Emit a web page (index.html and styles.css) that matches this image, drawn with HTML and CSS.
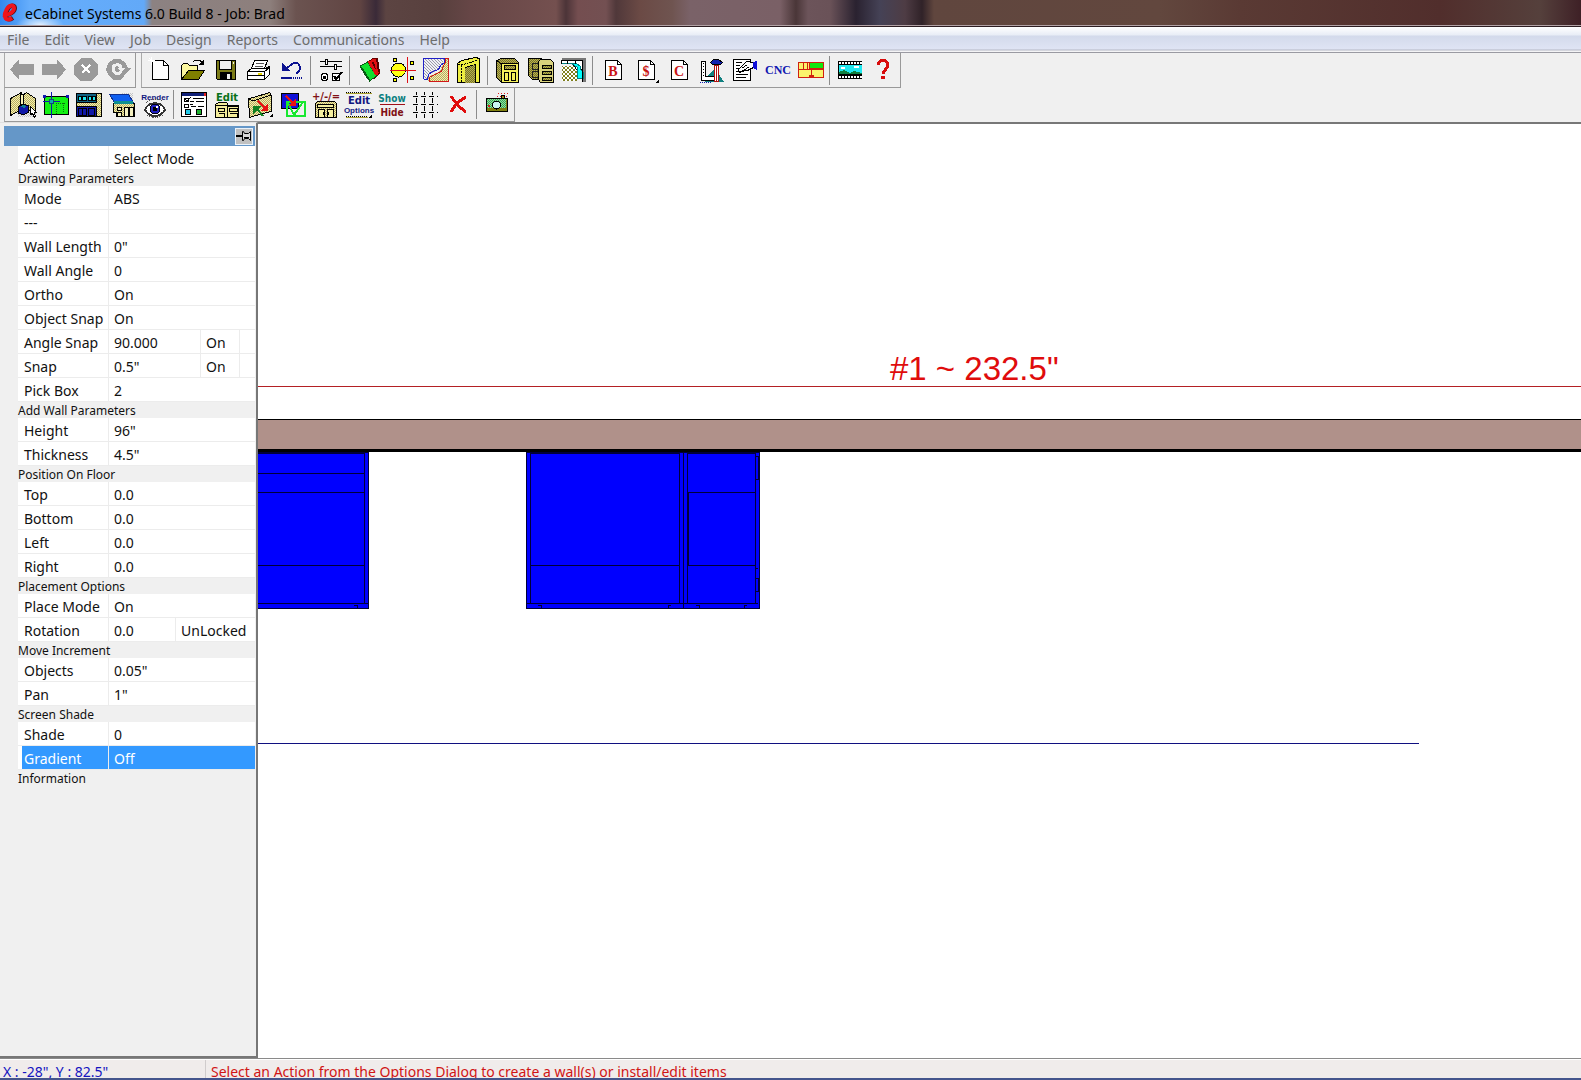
FILE: index.html
```html
<!DOCTYPE html>
<html lang="en">
<head>
    <meta charset="UTF-8">
    <meta name="viewport" content="width=device-width, initial-scale=1.0">
    <title>eCabinet Systems 6.0 Build 8 - Job: Brad</title>
    <link rel="stylesheet" href="styles.css">
</head>
<body>
    <!-- shared dither fills for the toolbar icons -->
    <svg class="defs" width="0" height="0" aria-hidden="true">
        <defs>
            <pattern id="khaki" width="2" height="2" patternUnits="userSpaceOnUse"><path fill="#f6efac" d="M0 0h2v2H0z"/><path fill="#b5ac62" d="M0 0h1v1H0zM1 1h1v1H1z"/></pattern>
            <pattern id="olive" width="2" height="2" patternUnits="userSpaceOnUse"><path fill="#b9b04e" d="M0 0h2v2H0z"/><path fill="#77742a" d="M0 0h1v1H0zM1 1h1v1H1z"/></pattern>
            <pattern id="check" width="4" height="4" patternUnits="userSpaceOnUse"><path fill="#fff" d="M0 0h4v4H0z"/><path fill="#808020" d="M0 0h2v2H0zM2 2h2v2H2z"/></pattern>
            <pattern id="grey" width="2" height="2" patternUnits="userSpaceOnUse"><path fill="#c4c4c4" d="M0 0h1v1H0zM1 1h1v1H1z"/></pattern>
            <pattern id="hatch" width="3" height="3" patternUnits="userSpaceOnUse"><path fill="#f0f0f6" d="M0 0h3v3H0z"/><path fill="#9a9aa8" d="M0 0h1v1H0zM1 1h1v1H1zM2 2h1v1H2z"/></pattern>
            <pattern id="greens" width="2" height="2" patternUnits="userSpaceOnUse"><path fill="#8fe0a0" d="M0 0h2v2H0z"/><path fill="#3aa455" d="M0 0h1v1H0zM1 1h1v1H1z"/></pattern>
        </defs>
    </svg>

    <header class="titlebar">
        <svg class="logo" viewBox="0 0 18 20" aria-hidden="true"><path fill="none" stroke="#5a0d12" stroke-width="4" d="M3 12c5 1 11-3 11-7 0-4-6-3-8 3-3 6 0 11 6 7"/><path fill="none" stroke="#f0141c" stroke-width="4" d="M2 12c5 1 11-3 11-7 0-4-6-3-8 3-3 6 0 11 6 7"/></svg>
        <h1>eCabinet Systems 6.0 Build 8 - Job: Brad</h1>
    </header>

    <nav class="menu">
        <button>File</button>
        <button>Edit</button>
        <button>View</button>
        <button>Job</button>
        <button>Design</button>
        <button>Reports</button>
        <button>Communications</button>
        <button>Help</button>
    </nav>

    <div class="toolbars">
        <div class="toolrow">
            <div class="group nav-group">
                <button aria-label="Back"><svg viewBox="0 0 26 26"><path fill="#9a9a9a" d="M1 12.500L10 2v5h15v11H10v5z"/></svg></button>
                <button aria-label="Forward"><svg viewBox="0 0 26 26"><path fill="#9a9a9a" d="M25 12.500L16 2v5H1v11h15v5z"/></svg></button>
                <button aria-label="Stop"><svg viewBox="0 0 26 26"><path fill="#9a9a9a" d="M8 1h10l7 7v10l-7 6H8l-7-6V8z"/><path stroke="#fff" stroke-width="2" d="M9 8l8 8M17 8l-8 8"/></svg></button>
                <button aria-label="Refresh"><svg viewBox="0 0 26 26"><path fill="#9a9a9a" d="M9 2h6l5 3 3 6h3l-7 8-4 4H9l-5-4-3-6 2-7z"/><path fill="none" stroke="#f0f0f0" stroke-width="3" d="M16 15c-3 3-8 1-8-3 0-5 7-6 8-1"/><path fill="#f0f0f0" d="M12 11h8l-4 4z"/></svg></button>
            </div>
            <div class="group main-group">
                <button aria-label="New"><svg viewBox="0 0 26 26"><path fill="#fff" stroke="#000" d="M5.500 3.500h11l5 5v14h-16z"/><path fill="none" stroke="#000" d="M16.500 3.500v5h5"/><path stroke="#fff" d="M4.500 0v8M1 3.500h7M2 1l5 5"/></svg></button>
                <button aria-label="Open"><svg viewBox="0 0 26 26"><path fill="#fbf7a0" stroke="#000" d="M1.500 22.500v-14l2-2h4l2 2h8v5h-8z"/><path fill="#808000" stroke="#000" d="M8.500 13.500h16l-6 9h-17z"/><path fill="none" stroke="#000" d="M13 5l2-2h5l3 4"/><path d="M24 2v6h-6z"/></svg></button>
                <button aria-label="Save"><svg viewBox="0 0 26 26"><path fill="#7b7b18" stroke="#000" d="M3.500 3.500h19v19h-18l-1-1z"/><path fill="#efefef" stroke="#000" d="M6.500 3.500h12v9h-12z"/><path d="M7 15h12v8H7z"/><path fill="#efefef" d="M14 17h3v5h-3zM20 5h1v2h-1z"/></svg></button>
                <button aria-label="Print"><svg viewBox="0 0 26 26"><path fill="#fff" stroke="#000" d="M8.500 3.500h13l-3 8h-13z"/><path fill="none" stroke="#555" d="M10 6.500h8M9 9.500h8"/><path fill="#fff" stroke="#000" d="M1.500 14.500l4-3h14l4-2v8l-5 5h-17z"/><path fill="none" stroke="#000" d="M1.500 14.500h17v8M18.500 14.500l5-4M1.500 18.500h17"/><path stroke="#e8d800" stroke-width="2" d="M12 17h4"/></svg></button>
                <button aria-label="Undo"><svg viewBox="0 0 26 26"><path fill="none" stroke="#0b1290" stroke-width="2" d="M8 11l5-4c5-3 8 0 8 4 0 3-2 4-4 6"/><path fill="#0b1290" d="M3 6v8h8z"/><path stroke="#0b1290" stroke-width="2" d="M2 21h11"/><path stroke="#0b1290" stroke-width="2" stroke-dasharray="1 1" d="M14 21h10"/></svg></button>
                <i class="sep"></i>
                <button aria-label="Settings"><svg viewBox="0 0 26 26"><path stroke="#000" d="M2 4.500h22M2 9.500h22"/><path fill="#fff" stroke="#000" d="M7.500 2.500h2v5h-2zM16.500 7.500h2v5h-2z"/><circle cx="6.500" cy="20" r="3.500" fill="#fff" stroke="#000"/><path d="M5 19h3v3H5z"/><path fill="#fff" stroke="#000" d="M14.500 16.500h7v7h-7z"/><path fill="none" stroke="#000" stroke-width="2" d="M16 19l2 3 6-7"/></svg></button>
                <i class="sep"></i>
                <button aria-label="Materials"><svg viewBox="0 0 26 26"><path fill="#e01010" stroke="#600" d="M12.500 4l4-3h4l2 15-5 5z"/><path fill="none" stroke="#500" stroke-width="2" d="M16 5l3 12M20 2l2 13"/><path fill="#12e030" stroke="#075a14" d="M3.500 9l7-4 9 14-7 5z"/><path stroke="#e01010" stroke-width="3" d="M12 4l8 14"/><path stroke="#075a14" stroke-width="2" d="M4 10l8 13"/><path fill="none" stroke="#fff" stroke-dasharray="2 1" d="M4 15l7 9"/></svg></button>
                <button aria-label="Hardware"><svg viewBox="0 0 26 26"><circle cx="8.500" cy="13" r="7" fill="#ffff10" stroke="#000"/><circle cx="5" cy="3" r="2" fill="#ff0" stroke="#000"/><circle cx="22" cy="6" r="2" fill="#ff0" stroke="#000"/><circle cx="5" cy="23" r="2" fill="#ff0" stroke="#000"/><circle cx="22" cy="21" r="2" fill="#ff0" stroke="#000"/><path stroke="#e01018" d="M17.500 0v26M0 13.500h26"/></svg></button>
                <button aria-label="Moulding"><svg viewBox="0 0 26 26"><path fill="url(#hatch)" d="M0 1h21v4l-4 4-2 5-8 3-2 6H0z"/><path fill="url(#khaki)" d="M25 1v23H5l1-5 5-2 6-3 3-7 2-6z"/><path fill="none" stroke="#2020c8" d="M.5 22V1.500h21v4l-4 3-2 4-6 2-4 3-1 5H1"/><path fill="none" stroke="#d01818" d="M25.500 1.500v23h-19v-4l5-3 7-3 2-6 2-3V1.500z"/></svg></button>
                <button aria-label="Door"><svg viewBox="0 0 26 26"><path fill="#eeee40" stroke="#000" d="M1.500 25.500v-19l4-3 14-3 4 1v24h-4v-18l-10 3v15z"/><path fill="url(#olive)" d="M9 11l10-3v18H9z"/><path fill="none" stroke="#000" stroke-dasharray="2 1" d="M2 7l4 1 16-5M5.500 8v17"/></svg></button>
                <i class="sep"></i>
                <button aria-label="Cabinet"><svg viewBox="0 0 26 26"><path fill="url(#olive)" stroke="#000" d="M1.500 3.500l5-2h13l4 4v20h-17l-5-5z"/><path fill="#f4ef5c" stroke="#000" d="M6.500 6.500h17v19h-17z"/><path fill="url(#olive)" stroke="#000" d="M9.500 8.500h11v4h-11z"/><path fill="#f4ef5c" stroke="#000" d="M9.500 15.500h4v8h-4zM16.500 15.500h4v8h-4z"/><path fill="none" stroke="#000" d="M2 4l5 3"/></svg></button>
                <button aria-label="Cabinets"><svg viewBox="0 0 26 26"><path fill="url(#olive)" stroke="#000" d="M.5 1.500h13l4 3v18H4.500l-4-4z"/><path fill="none" stroke="#222" d="M4.500 6.500h7v6h-7zM4.500 14.500h7v6h-7z"/><path fill="#d9d27c" stroke="#000" d="M10.500 4.500l2-2h10l3 3v20h-13l-2-3z"/><path fill="url(#olive)" stroke="#000" d="M14.500 8.500h9v3h-9zM14.500 14.500h9v3h-9zM14.500 20.500h9v3h-9z"/></svg></button>
                <button aria-label="Countertop"><svg viewBox="0 0 26 26"><path fill="url(#check)" d="M1 9h15v15H1z"/><path fill="#777" d="M1 1h24v24h-3V4H1z"/><path fill="#fff" stroke="#000" d="M.5 3.500h21v9h-6l-4-6H.5z"/><path fill="#0ff" stroke="#008080" d="M.5 6.500h10l6 4v11h6v-6l-3-3v-3l-4-3z"/><path stroke="#000" d="M6.500 3v4M14.500 3v4M21.500 9v16"/></svg></button>
                <i class="sep"></i>
                <button aria-label="Buy list"><svg viewBox="0 0 26 26"><path fill="#fff" stroke="#000" d="M5.500 3.500h12l4 4v15h-16z"/><path fill="none" stroke="#000" d="M17.500 3.500v4h4"/><text class="letter" x="13" y="19">B</text></svg></button>
                <button aria-label="Costing"><svg viewBox="0 0 26 26"><path fill="#fff" stroke="#000" d="M5.500 3.500h12l4 4v15h-16z"/><path fill="none" stroke="#000" d="M17.500 3.500v4h4"/><text class="letter" x="13" y="19">$</text><path d="M26 22v4h-4z"/></svg></button>
                <button aria-label="Cut list"><svg viewBox="0 0 26 26"><path fill="#fff" stroke="#000" d="M5.500 3.500h12l4 4v15h-16z"/><path fill="none" stroke="#000" d="M17.500 3.500v4h4"/><text class="letter" x="13" y="19">C</text></svg></button>
                <button aria-label="Design tools"><svg viewBox="0 0 26 26"><path fill="#108080" d="M8 20l8-9 9 14H6z"/><path fill="#fff" stroke="#000" d="M2.500 4.500h4v15h11v4h-15z"/><path stroke="#000" stroke-dasharray="1 2" d="M4.500 6v14"/><path fill="#fff" stroke="#b01010" d="M15.500 8.500h4v16h-4z"/><path stroke="#b01010" d="M17.500 8v16"/><path fill="#1020b0" stroke="#000" d="M11.500 5.500l3-3h5l4 3-2 2h-8z"/><path stroke="#1020b0" stroke-dasharray="1 1" d="M1 25.500h12"/></svg></button>
                <button aria-label="Edit report"><svg viewBox="0 0 26 26"><path fill="#fff" stroke="#000" d="M1.500 2.500h17v21h-17z"/><path stroke="#000" d="M4 5.500h6M4 8.500h4M4 11.500h3M4 17.500h12M4 20.500h10M4 14.500h8"/><path fill="#fff" stroke="#000" d="M6.500 12.500l8-8 7 1v5l-6 3h-4l-4 2z"/><path stroke="#000" d="M10 11l5-3M12 13l5-3"/><path fill="#1010d8" d="M21 5l4-1v9l-4-2z"/></svg></button>
                <button aria-label="CNC"><svg viewBox="0 0 26 26"><text class="cnc" x="13" y="17">CNC</text></svg></button>
                <button aria-label="Nest"><svg viewBox="0 0 26 26"><path fill="#fbf46c" stroke="#d02010" d="M.5 5.500h25v15H.5z"/><path fill="#10e810" stroke="#d02010" d="M11.500 5.500h14v6h-14z"/><path fill="none" stroke="#d02010" d="M0 12.500h25M5.500 6v6M9.500 6v6M13.500 12v6"/><path fill="#d02010" d="M11 18h5v2h-5z"/></svg></button>
                <i class="sep"></i>
                <button aria-label="Video"><svg viewBox="0 0 26 26"><path d="M1 4h24v18H1z"/><path fill="#20e8f0" d="M2 8h23v9H2z"/><path fill="#108040" d="M2 17v-2l5-2 6 3 4-2 8 2v1z"/><path fill="#fff" d="M4 10h4v2H4zM17 9h5v2h-5z"/><path stroke="#fff" stroke-width="2" stroke-dasharray="2 1" d="M2 6h23M2 20h23"/></svg></button>
                <button aria-label="Help"><svg viewBox="0 0 26 26"><path fill="none" stroke="#d80c0c" stroke-width="3" d="M8 8c0-6 10-6 10 0 0 5-5 4-5 9"/><path fill="#d80c0c" d="M11 19h4v3h-4z"/></svg></button>
            </div>
        </div>

        <div class="toolrow">
            <div class="group">
                <button aria-label="Room view"><svg viewBox="0 0 26 26"><path fill="url(#khaki)" stroke="#000" d="M.5 6.500l11-6v17l-11 6zM11.500 4.500l5-4 9 6v14l-13-4z"/><path fill="#fbf4b8" stroke="#000" d="M10.500 1.500l3 2v14l-3 2z"/><path fill="url(#grey)" d="M7 20h19v5H8z"/><path fill="#1018a8" stroke="#000" d="M8.500 14.500l4-2 6 1v7l-5 2-5-1z"/><path fill="#108090" d="M10 14l3-1 4 1-3 2z"/><path fill="#fff" stroke="#000" d="M20.500 14.500v8l2-1 2 4 1-1-1-4h2z"/></svg></button>
                <button aria-label="Plan view"><svg viewBox="0 0 26 26"><path fill="#14f014" stroke="#000" d="M1.500 4.500h24v18h-24z"/><path stroke="#0a7010" stroke-dasharray="1 1" fill="none" d="M13.500 11v11M20.500 11v10M13 11.500h10"/><path fill="none" stroke="#1018b0" d="M0 9.500h17M8.500 0v26"/><path fill="#10a8b0" stroke="#104878" d="M6.500 7.500h4v4h-4z"/><path fill="#1018b0" d="M0 3h3v3H0zM23 3h3v3h-3z"/></svg></button>
                <button aria-label="Elevation view"><svg viewBox="0 0 26 26"><path fill="url(#khaki)" stroke="#000" d="M.5 1.500h25v23H.5z"/><path fill="#106080" stroke="#000" d="M.5 1.500h20v9H.5z"/><path fill="#20e8f0" stroke="#000" d="M2.500 4.500h3v4h-3zM6.500 4.500h4v4h-4zM12.500 4.500h3v4h-3zM16.500 4.500h3v4h-3z"/><path fill="#1018a8" stroke="#000" d="M.5 14.500h20v10H.5z"/><path fill="none" stroke="#000" d="M2.500 16.500h8v7h-8zM12.500 16.500h6v7h-6zM6.500 17v7"/></svg></button>
                <button aria-label="Top view"><svg viewBox="0 0 26 26"><path fill="url(#grey)" d="M12 1h12v10H12z"/><path fill="url(#khaki)" stroke="#000" d="M4.500 11.500h21v13h-18v-4h-3z"/><path fill="#f4f0c0" stroke="#000" d="M8.500 15.500h4v3h-4zM8.500 20.500h4v4h-4zM15.500 15.500h4v9h-4zM20.500 15.500h4v9h-4z"/><path fill="#1060f0" stroke="#103090" d="M.5 2.500h19l5 8H5.500z"/><path fill="#109090" d="M5 9h19v3H5z"/></svg></button>
                <button aria-label="Render"><svg viewBox="0 0 26 26"><text class="tiny navy" x="13" y="8">Render</text><path fill="#fff" stroke="#333" stroke-width="2" d="M3 18c3-9 17-9 20 0-5 8-15 8-20 0z"/><circle cx="13" cy="17" r="5" fill="#2020c0" stroke="#001"/><path d="M11 15h4v4h-4z"/><path fill="#fff" d="M14 14h2v2h-2z"/><path stroke="#555" stroke-dasharray="1 1" fill="none" d="M4 11c4-5 14-5 18 0M5 23c4 3 12 3 16 0"/></svg></button>
                <i class="sep"></i>
                <button aria-label="Properties"><svg viewBox="0 0 26 26"><path fill="#fff" stroke="#000" d="M.5.5h25v24H.5z"/><path fill="#102078" d="M1 1h22v3H1z"/><path fill="#e02020" d="M23 1h2v3h-2z"/><path fill="#fff" stroke="#000" d="M3.500 6.500h4v3h-4zM3.500 12.500h4v3h-4z"/><path fill="none" stroke="#000" d="M4 7l2 2 4-4M9 9.500h4M15 9.500h8M12 6.500h11M10 14.500h5M17 14.500h6M9 12.500h3"/><path fill="#20c8e8" stroke="#000" d="M4.500 17.500h5v5h-5z"/><path fill="#20b030" stroke="#000" d="M15.500 17.500h5v5h-5z"/></svg></button>
                <button aria-label="Edit cabinet"><svg viewBox="0 0 26 26"><text class="caption green" x="13" y="9">Edit</text><path fill="#f3ec9a" stroke="#000" d="M1.500 25.500v-13l3-2h8l2 3h10v12z"/><path fill="none" stroke="#000" d="M1.500 13.500h12v12M4.500 16.500h6v3h-6zM4.500 21.500h6v4M15.500 16.500h8v3h-8zM15.500 21.500h8v4M13 14.500h12"/></svg></button>
                <button aria-label="Move wall"><svg viewBox="0 0 26 26"><path fill="url(#khaki)" stroke="#000" d="M1.500 6.500l5-1 16-5 2 3v16l-9 2-13 4z"/><path fill="none" stroke="#000" d="M2 7l4 2 18-6"/><path stroke="#e81010" stroke-width="2" d="M11 9l8 8"/><path fill="#e81010" d="M21 11v8h-8z"/><path stroke="#108020" stroke-width="2" d="M10 17l6 7"/><path fill="#108020" d="M6 14h8l-8 8z"/><path d="M26 21v4h-4z"/></svg></button>
                <button aria-label="Replace"><svg viewBox="0 0 26 26"><path fill="#1010d8" stroke="#000" d="M1.500 1.500h17v15h-17z"/><path fill="none" stroke="#18e830" stroke-width="2" d="M7 10h18v14H7zM8 11l6 12 9-13"/><path stroke="#e81010" stroke-width="2" d="M6 4l7 7"/><path fill="#e81010" d="M16 6v8H8z"/></svg></button>
                <button aria-label="Resize"><svg viewBox="0 0 26 26"><text class="caption maroon" x="13" y="8">+/-/=</text><path fill="url(#khaki)" stroke="#000" d="M2.500 11.500l2-2h17l2 2v14h-21z"/><path fill="#f5efa0" stroke="#000" d="M4.500 12.500h16v3h-16zM5.500 17.500h6v8h-6zM14.500 17.500h6v8h-6z"/><path d="M10 20h1v3h-1zM15 20h1v3h-1z"/></svg></button>
                <button aria-label="Edit options"><svg viewBox="0 0 26 26"><path stroke="#000" stroke-dasharray="1 1" d="M0 .5h26M0 24.500h22"/><path stroke="#a8a030" d="M0 1.500h26M0 25.500h22"/><text class="caption navy" x="13" y="12">Edit</text><text class="tiny navy" x="13" y="21">Options</text><path d="M26 22v4h-4z"/></svg></button>
                <button aria-label="Show hide"><svg viewBox="0 0 26 26"><text class="caption narrow teal" x="13" y="10">Show</text><path stroke="#a01018" d="M1 12.500h25"/><text class="caption narrow maroon" x="13" y="24">Hide</text></svg></button>
                <button aria-label="Grid"><svg viewBox="0 0 26 26"><path stroke="#000" stroke-dasharray="5 3" stroke-dashoffset="-1" fill="none" d="M0 4.500h26M0 12.500h26M0 20.500h26"/><path stroke="#000" stroke-dasharray="5 3" stroke-dashoffset="2" fill="none" d="M4.500 0v26M12.500 0v26M20.500 0v26"/></svg></button>
                <button aria-label="Delete"><svg viewBox="0 0 26 26"><path fill="none" stroke="#e00c0c" stroke-width="3" d="M6 4c3 5 9 12 15 16M21 5C15 8 9 14 6 20"/></svg></button>
                <i class="sep"></i>
                <button aria-label="Snapshot"><svg viewBox="0 0 26 26"><path fill="#808010" stroke="#000" d="M2.500 6.500h21v13h-21z"/><path fill="url(#greens)" d="M3 7h19v9H3z"/><circle cx="12.500" cy="13" r="4" fill="#c8f4f0" stroke="#000"/><path fill="#a0a018" stroke="#000" d="M17.500 3.500h3v3h-3z"/><path stroke="#e02020" stroke-dasharray="1 2" d="M14 1.500h10M13 4.500h12"/><path fill="#d02020" d="M4 13h2v2H4z"/></svg></button>
            </div>
        </div>
    </div>

    <main class="workspace">
        <aside class="panel">
            <div class="panel-head">
                <button class="pin" aria-label="Pin panel"><svg viewBox="0 0 16 14"><path stroke="#000" stroke-width="2" d="M0 7h7"/><path fill="#d8d8d8" stroke="#000" d="M6.500 2.500h1l1 2h4l2-2v9l-2-2h-4l-1 2h-1z"/><path stroke="#000" d="M8 8.500h5"/></svg></button>
            </div>
            <table class="props">
                <colgroup><col class="c1"><col class="c2"><col class="c3"><col class="c4"><col class="c5"></colgroup>
                <tr><th scope="row">Action</th><td colspan="4">Select Mode</td></tr>
                <tr class="section"><th colspan="5">Drawing Parameters</th></tr>
                <tr><th scope="row">Mode</th><td colspan="4">ABS</td></tr>
                <tr><th scope="row">---</th><td colspan="4"></td></tr>
                <tr><th scope="row">Wall Length</th><td colspan="4">0"</td></tr>
                <tr><th scope="row">Wall Angle</th><td colspan="4">0</td></tr>
                <tr><th scope="row">Ortho</th><td colspan="4">On</td></tr>
                <tr><th scope="row">Object Snap</th><td colspan="4">On</td></tr>
                <tr><th scope="row">Angle Snap</th><td colspan="2">90.000</td><td>On</td><td></td></tr>
                <tr><th scope="row">Snap</th><td colspan="2">0.5"</td><td>On</td><td></td></tr>
                <tr><th scope="row">Pick Box</th><td colspan="4">2</td></tr>
                <tr class="section"><th colspan="5">Add Wall Parameters</th></tr>
                <tr><th scope="row">Height</th><td colspan="4">96"</td></tr>
                <tr><th scope="row">Thickness</th><td colspan="4">4.5"</td></tr>
                <tr class="section"><th colspan="5">Position On Floor</th></tr>
                <tr><th scope="row">Top</th><td colspan="4">0.0</td></tr>
                <tr><th scope="row">Bottom</th><td colspan="4">0.0</td></tr>
                <tr><th scope="row">Left</th><td colspan="4">0.0</td></tr>
                <tr><th scope="row">Right</th><td colspan="4">0.0</td></tr>
                <tr class="section"><th colspan="5">Placement Options</th></tr>
                <tr><th scope="row">Place Mode</th><td colspan="4">On</td></tr>
                <tr><th scope="row">Rotation</th><td>0.0</td><td colspan="3">UnLocked</td></tr>
                <tr class="section"><th colspan="5">Move Increment</th></tr>
                <tr><th scope="row">Objects</th><td colspan="4">0.05"</td></tr>
                <tr><th scope="row">Pan</th><td colspan="4">1"</td></tr>
                <tr class="section"><th colspan="5">Screen Shade</th></tr>
                <tr><th scope="row">Shade</th><td colspan="4">0</td></tr>
                <tr class="selected"><th scope="row">Gradient</th><td colspan="4">Off</td></tr>
                <tr class="section"><th colspan="5">Information</th></tr>
            </table>
        </aside>

        <section class="canvas">
            <svg class="plan" width="100%" height="100%" role="img" aria-label="Floor plan">
                <!-- wall dimension -->
                <text class="dimension" x="632" y="256">#1 ~ 232.5"</text>
                <rect width="100%" height="1" y="262" fill="#b42024"/>
                <!-- wall -->
                <rect width="100%" height="33" y="295" fill="#000"/>
                <rect width="100%" height="29" y="296" fill="#b0918a"/>
                <!-- left cabinet -->
                <g class="cabinet">
                    <path d="M-4.500 328.500h115v156h-115z"/>
                    <path d="M0 329.500h106M0 349.500h106M0 368.500h106M0 441.500h106M0 479.500h110M106.500 328v151M96 481.500h3v3h-3"/>
                </g>
                <!-- right cabinets -->
                <g class="cabinet">
                    <path d="M268.500 328.500h233v156h-233z"/>
                    <path d="M272.500 328v151M421.500 328v151M425.500 328v156M429.500 328v151M497.500 328v151M268 479.500h232M272 329.500h149M430 329.500h67M272 441.500h149M430 441.500h67M430 368.500h67M430.500 368v73M498 332.500h2v23h-2M498 444.500h2M498 454.500h2v13h-2"/>
                    <path d="M280 481.500h3v3h-3M410 484.500v-3h3M438 481.500h3v3h-3M486 484.500v-3h3"/>
                </g>
                <rect width="1161" height="1" y="619" fill="#101080"/>
            </svg>
        </section>
    </main>

    <footer class="status">
        <span class="coords">X : -28", Y : 82.5"</span>
        <span class="hint">Select an Action from the Options Dialog to create a wall(s) or install/edit items</span>
    </footer>
</body>
</html>
```

FILE: styles.css
```css
body {
    margin: 0;
    height: 100vh;
    display: flex;
    flex-direction: column;
    overflow: hidden;
    background-color: #f0f0f0;
    color: #111;
    font-family: "Noto Sans", "Open Sans", sans-serif;
    font-size: 14px;
}
button {
    margin: 0;
    padding: 0;
    border: none;
    background: none;
    font: inherit;
    color: inherit;
}
.defs {
    position: absolute;
}

/* title bar */
.titlebar {
    flex: none;
    height: 27px;
    box-sizing: border-box;
    display: flex;
    align-items: center;
    gap: 6px;
    padding-left: 1px;
    border-bottom: 1px solid #2c1d22;
    box-shadow: inset 0 -1px #b3a3a6;
    background:
        radial-gradient(ellipse 24px 10px at 40px 25px, rgba(255, 255, 255, 0.8), rgba(255, 255, 255, 0)),
        linear-gradient(to right, #3388ee 0, #66aefc 30px, #62a9f8 144px, #8c8282 152px, #8d7f7c 270px, #6b5350 296px, #604442 360px,
        #3a2a38 376px, #5c4442 386px, #58403e 440px, #664646 470px, #74504f 556px, #4c3438 566px, #744e50 578px, #735052 606px,
        #50383a 616px, #6b4a45 640px, #6f5450 672px, #7a6268 690px, #7a6066 780px, #4a3638 796px, #6c545a 808px, #6a5258 830px,
        #2a2230 856px, #454256 880px, #4e3c44 905px, #302228 922px, #60463e 934px, #62473e 1160px, #5a3a34 1240px, #512e2c 1440px,
        #55403c 1540px, #3e2026);
}
.logo {
    width: 18px;
    height: 22px;
}
.titlebar h1 {
    margin: 0;
    font-size: 14px;
    font-weight: normal;
    color: #000;
}

/* menu */
.menu {
    flex: none;
    display: flex;
    gap: 15px;
    height: 26px;
    box-sizing: border-box;
    padding: 0 7px;
    border-bottom: 1px solid #9a9aa2;
    background: linear-gradient(#fff, #e8edf6 8px, #d3daeb 9px, #dfe4f4 22px, #b4b7c4 23px, #f4f4f6 24px);
    color: #6d6d6d;
}

/* toolbars */
.toolbars {
    flex: none;
    background-color: #f0f0f0;
}
.toolrow {
    display: flex;
    height: 35px;
    box-sizing: border-box;
}
.toolrow:last-child {
    height: 34px;
}
.group {
    display: flex;
    align-items: center;
    padding: 0 1px;
    border-right: 1px solid #999;
    border-bottom: 1px solid #999;
    border-left: 1px solid #aaa;
    margin-left: 4px;
}
.group button {
    width: 33px;
    height: 26px;
}
.group svg {
    display: block;
    width: 26px;
    height: 26px;
    margin: 0 auto;
    overflow: visible;
    shape-rendering: crispEdges;
}
.nav-group button {
    width: 32px;
}
.main-group {
    margin-left: 5px;
}
.sep {
    width: 1px;
    height: 29px;
    margin: 0 3px 0 2px;
    background-color: #8c8c8c;
}
.letter {
    font: bold 14px "Liberation Serif", serif;
    fill: #c81414;
    text-anchor: middle;
}
.cnc {
    font: bold 12px "Liberation Serif", serif;
    fill: #1018b0;
    text-anchor: middle;
}
.caption {
    font: bold 10px "DejaVu Sans", sans-serif;
    text-anchor: middle;
}
.narrow {
    font-family: "DejaVu Sans Condensed", "DejaVu Sans", sans-serif;
}
.tiny {
    font: bold 8px "Liberation Sans", sans-serif;
    text-anchor: middle;
}
.navy { fill: #101880; }
.green { fill: #087018; }
.maroon { fill: #801014; }
.teal { fill: #0c8080; }

/* workspace */
.workspace {
    flex: 1;
    display: flex;
    min-height: 0;
    border-bottom: 1px solid #8a8a8a;
}
.panel {
    flex: none;
    width: 258px;
    box-sizing: border-box;
    padding: 3px 1px 0 4px;
    border: solid #777;
    border-width: 1px 2px 2px 0;
    border-top-color: #e0e0e0;
    background-color: #f0f0f0;
}
.panel-head {
    display: flex;
    justify-content: flex-end;
    align-items: center;
    height: 20px;
    padding-right: 2px;
    background-color: #6597c8;
}
.pin {
    width: 18px;
    height: 17px;
    border: 1px solid #eaf2fa;
    background-color: #c0c0c0;
}
.pin svg {
    display: block;
    width: 16px;
    height: 14px;
}
.props {
    width: 237px;
    margin-left: 14px;
    border-collapse: separate;
    border-spacing: 0;
    table-layout: fixed;
}
.c1 { width: 91px; }
.c2 { width: 67px; }
.c3 { width: 25px; }
.c4 { width: 39px; }
.c5 { width: 15px; }
.props th,
.props td {
    height: 21px;
    padding: 2px 0 0 5px;
    border-right: 1px solid #ececec;
    border-bottom: 1px solid #ececec;
    background-color: #fff;
    font-weight: normal;
    line-height: 20px;
    text-align: left;
    white-space: nowrap;
}
.props th {
    padding-left: 6px;
}
.props td:last-child {
    border-right: none;
}
.props .section th {
    height: 15px;
    padding: 1px 0 0;
    border: none;
    background-color: #f0f0f0;
    font-size: 12px;
    line-height: 15px;
}
.props .selected th,
.props .selected td {
    background-color: #3399ff;
    color: #fff;
}
.props .selected th {
    box-shadow: inset 4px 0 #fff;
}
.canvas {
    flex: 1;
    min-width: 0;
    border-top: 2px solid #777;
    background-color: #fff;
}
.plan {
    display: block;
    shape-rendering: crispEdges;
}
.dimension {
    font: 33px "Liberation Sans", sans-serif;
    fill: #e00c0c;
}
.cabinet path {
    fill: #0000ff;
    stroke: #000038;
}
.cabinet path + path {
    fill: none;
}

/* status bar */
.status {
    flex: none;
    display: flex;
    height: 21px;
    box-sizing: border-box;
    border-top: 1px solid #fff;
    border-bottom: 2px solid #45558c;
    background-color: #f0eceb;
    line-height: 24px;
    white-space: nowrap;
    overflow: hidden;
}
.coords {
    width: 202px;
    padding-left: 3px;
    border-right: 1px solid #d0cccc;
    color: #1414c0;
}
.hint {
    padding-left: 5px;
    color: #d01414;
}
```
